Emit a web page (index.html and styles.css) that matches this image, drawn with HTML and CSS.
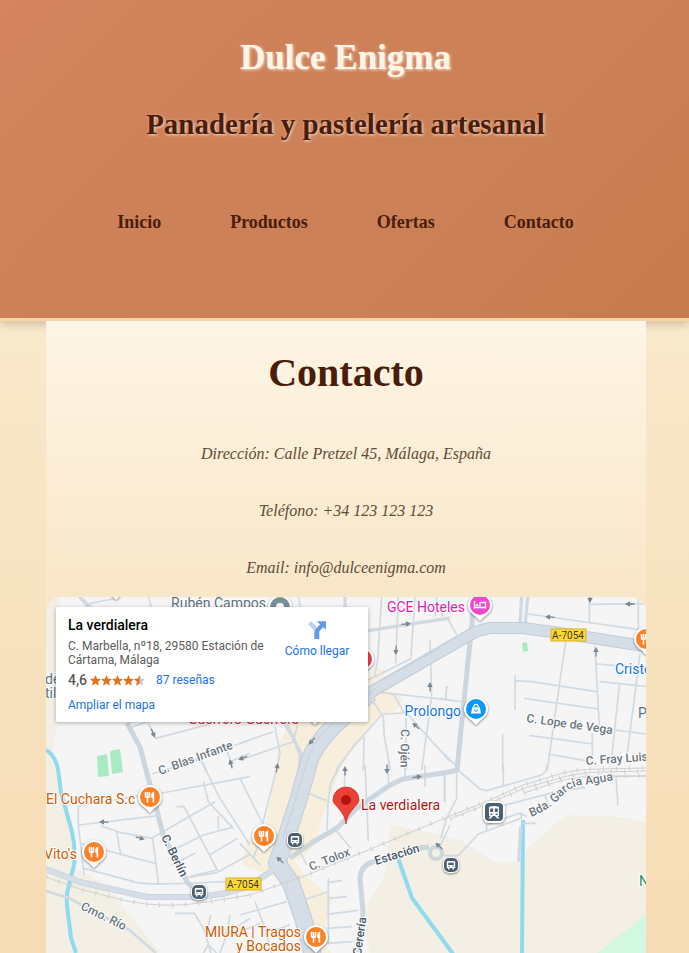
FILE: index.html
```html
<!DOCTYPE html>
<html lang="es">
<head>
<meta charset="utf-8">
<meta name="viewport" content="width=device-width, initial-scale=1">
<title>Dulce Enigma - Contacto</title>
<link rel="stylesheet" href="styles.css">
</head>
<body>
<header class="site-header">
  <h1 class="brand">Dulce Enigma</h1>
  <h2 class="tagline">Panadería y pastelería artesanal</h2>
  <nav class="menu">
    <a href="#inicio">Inicio</a>
    <a href="#productos">Productos</a>
    <a href="#ofertas">Ofertas</a>
    <a href="#contacto">Contacto</a>
  </nav>
</header>
<div class="page">
<main class="contact">
  <h2 class="title">Contacto</h2>
  <address class="details">
    <p>Dirección: Calle Pretzel 45, Málaga, España</p>
    <p>Teléfono: +34 123 123 123</p>
    <p>Email: info@dulceenigma.com</p>
  </address>
  <section class="map" aria-label="Mapa">
    <svg class="map-canvas" viewBox="0 0 600 356" preserveAspectRatio="xMidYMin slice">
      <defs>
        <g id="tail"><path d="M-12 0a12 12 0 1 1 24 0c0 6-3 8-7 11l-5 5-5-5c-4-3-7-5-7-11z" fill="#fff"/></g>
        <g id="food">
          <use href="#tail" class="pin-shadow"/><circle r="10" fill="#ff8126"/>
          <path d="M-4.500-5v4q0 1.500 2 1.500t2-1.500v-4M-2.500-5V5.500" fill="none" stroke="#fff" stroke-width="1.500"/>
          <path d="M4.200-5.200V5.500H2.600V1H1.200V-2Q1.300-5 4.200-5.200z" fill="#fff"/>
        </g>
        <g id="bus">
          <rect x="-8" y="-8" width="16" height="16" rx="6" fill="#fff" class="pin-shadow"/>
          <rect x="-7" y="-7" width="14" height="14" rx="5" fill="#4b6072"/>
          <path d="M-3.500-4h7l.7.800V3H3v1.500H1.500V3h-3v1.500H-3V3h-1.200v-6.200z" fill="#fff"/>
          <path d="M-2.800-2.300h5.600V0h-5.600z" fill="#4b6072"/><path d="M-2.700 1.300h1.200M1.500 1.300h1.200" stroke="#4b6072"/>
        </g>
        <g id="arrow"><path d="M-4.500 0H2" stroke="#7b858e" stroke-width="1.300"/><path d="M0-2.700L5 0 0 2.700z" fill="#7b858e"/></g>
      </defs>

      <rect width="600" height="356" fill="#f5f5f5"/>
      <!-- Land use -->
      <g class="land">
        <path d="M0 0h14l-3 126-4 30 8 38 13 45v33l16 6 20 15 50 63H0z"/>
        <path d="M345 227l49 11 20 5 35 22h25l5-11 40-36 55 2 26 5v183H313l6-20 7-24-5-20-4-22 6-17 15-25z"/>
      </g>
      <path class="shops" d="M322 85L327 70 337 73 341 83 344 93 357 101 351 113 336 118 307 153 294 171 291 181 274 228 269 248 249 265 261 281 287 301 281 318 279 348 285 356H261L257 325 244 301 231 281 196 268 201 245 219 230 229 180 232 150 244 124 262 120z"/>
      <path fill="#d3f8e2" d="M551 356l49-38v38z"/>
      <path fill="#a8ebc2" d="M51 159l10-2 2 22-11 1zM64 154l10-2 3 23-11 2zM476 46l5-1 1 9-5 1z"/>
      <!-- Rivers -->
      <g class="river">
        <path d="M0 153q9 5 12 19l3 23 11 40q4 18 2 33l-5 20q-3 9-2 20l4 33 5 15"/>
        <path d="M352 261l14 40 41 56"/>
        <path d="M477 223l-1 133"/>
      </g>
      <!-- Local streets, drawn per map tile -->
      <g class="streets">
        <g transform="translate(-6 -7) scale(.333333)">
          <path d="M120 20l35 30M150 40l70-13M325 20l15 50M275 412l50-18M325 400l22 45 160-42M630 450l-230 80M480 500l20 45M560 480l18 50M630 490l-60 25"/>
          <path class="mid" d="M118 20l36 40"/>
        </g>
        <g transform="translate(194 -7) scale(.333333)">
          <path d="M175 20l8 40M425 20l-12 190-10 50M475 20l-8 200M525 20l-12 180M590 20l-5 60M570 150l5 170-30 220M425 308l205 22M460 312l35 60M400 335l30 45 3 60 18 100M430 372l70-3 130 145M425 375l-85 95-52 70M372 440l-2 100M498 385v155M620 290l-3 40M0 460l100-35M105 410l15 80-10 50M0 510l160-55 15-60M140 400l45 90-8 50M155 440l-25-40M340 330l-80 70M385 270l130-65"/>
          <path class="mid" d="M385 122l245-38M315 20v40M140 400l40 90v50"/>
        </g>
        <g transform="translate(394 -7) scale(.333333)">
          <path d="M8 45l-2 35M22 85l28 48M265 72l353 50M448 20v80M450 43l168-2M595 20v100M378 150l-28 190-28 200M465 170l13 240M470 222l60 5M478 275l140 14M538 285l-22 210M600 190l-20 160-18 140M225 255v105M225 272l50 3 195 30M252 325l223 32M525 420l93 12M268 436l190 26M457 430v70M325 492l110 20M188 432v108M0 326l70 10M20 288l-3 40M0 480l50 48"/>
          <path class="mid" d="M245 20l-5 80M263 20l-7 80"/>
        </g>
        <g transform="translate(-6 168) scale(.333333)">
          <path d="M335 27l160-48M350 87l280-52M355 152L115 180v-55l15-5 185-30M115 180l17 150M180 182l60 20 95 18 190-110M230 200l12 70M120 235l225 60M338 220l18 140M132 310l150 40q40 15 350-5M410 125h22l100 190-80 18M480-20l60 120 90 140M490 50l15 60 75 80M410 250l80-40 85-22M535 152v42M395 300l72-36M508 270l85-50M440 338l90-15 100-55M630 355l-50 20M405 445h58l30 50 20 70M512 450l-12 60M570 450l-10 60-20 54M630 460l-80 50M490 564l15-25 25 25"/>
          <path class="mid-thin" d="M18 378l70 22 180 95 80 69"/>
        </g>
        <g transform="translate(194 168) scale(.333333)">
          <path d="M300 0l-28 55-8 60-3 80M315 10l-3 80M375 0l10 228M443 0l3 60M205 85l55 22M287 195l45 55M180 260l20 40M110 10l-48 190M0 40l70 140M0 235l60 65M40 280l25-70 55 0M555 0v65M613 30v80M495 0v40M630 180l-35 75M265 340v200M265 353l42-7M265 400l55-5M260 448l95-12M260 490l75-5M258 535l80-5M45 410l30 80 20 74M0 450l140-40M0 360l60-20M190 405l75-25M0 500l60-25M90 500l60-20"/>
        </g>
        <g transform="translate(394 168) scale(.333333)">
          <path d="M50 12l70 60 20 5 165-47 15-15V0M50 20v80l-30 60-18 60M190 0v60M15 30v80M0 272h55l60-65 130-48-5-15-100 35v20M190 122l150-40M315 90l10 30M345 80l90-12M500 35l118-2M528 40l6 82M243 145l17 10M245 175h42M420 60l15 12"/>
          <path class="mid" d="M242 185l-6 105"/>
        </g>
      </g>
      <!-- Collector roads -->
      <g class="collector">
        <path d="M81 126l13 24 6 23 9 32 8 33 24 47 8 8"/>
        <path d="M244 261l23-16 24-14 20-20 33-23 13-6 47-7 7-2 6-60 9-87 2-26"/>
        <path d="M383 250l-9 1-47 14q-12 3-13 16l3 34-5 42"/>
      </g>
      <circle class="roundabout" cx="390" cy="256" r="6"/>
      <!-- A-7054 -->
      <g class="highway-edge">
        <path class="w8" d="M0 272l34 13 67 15h53l27-4 23-7 27-19"/>
        <path class="w14" d="M610 51L521 37l-44-6h-33q-15 3-22 8l-95 55-15 12"/>
        <path class="w20" d="M324 96l-30 27q-25 23-31 42l-10 36-14 43-8 22 14 20 12 35 11 42"/>
      </g>
      <g class="highway">
        <path class="w8" d="M0 272l34 13 67 15h53l27-4 23-7 27-19"/>
        <path class="w14" d="M610 51L521 37l-44-6h-33q-15 3-22 8l-95 55-15 12"/>
        <path class="w20" d="M324 96l-30 27q-25 23-31 42l-10 36-14 43-8 22 14 20 12 35 11 42"/>
      </g>
      <path class="divider" d="M330 91l-36 29q-25 21-31 38l-13 43-13 40M394 51L324 89"/>
      <!-- Railway -->
      <g class="rail">
        <path d="M0 280l37 13 44 11q40 8 80 1l43-7 57-20 66-27 77-32 40-16 33-15 27-8q20-8 50-8l46-1"/>
        <path d="M404 222l40-16 35-15 28-8q20-7 47-8l46-1M478 196l32-11q20-6 44-6h46"/>
      </g>
      <g class="ties">
        <path d="M0 280l37 13 44 11q40 8 80 1l43-7 57-20 66-27 77-32 40-16 33-15 27-8q20-8 50-8l46-1"/>
        <path d="M404 222l40-16 35-15 28-8q20-7 47-8l46-1M478 196l32-11q20-6 44-6h46"/>
      </g>
      <!-- One-way arrows -->
      <g>
        <use href="#arrow" transform="translate(107 136) rotate(68)"/>
        <use href="#arrow" transform="translate(58 225) rotate(184)"/>
        <use href="#arrow" transform="translate(94 241) rotate(16)"/>
        <use href="#arrow" transform="translate(185 167) rotate(-105)"/>
        <use href="#arrow" transform="translate(197 161) rotate(160)"/>
        <use href="#arrow" transform="translate(231 171) rotate(-80)"/>
        <use href="#arrow" transform="translate(266 144) rotate(132)"/>
        <use href="#arrow" transform="translate(299 174) rotate(-90)"/>
        <use href="#arrow" transform="translate(371 180) rotate(-8)"/>
        <use href="#arrow" transform="translate(370 129) rotate(222)"/>
        <use href="#arrow" transform="translate(384 90) rotate(-90)"/>
        <use href="#arrow" transform="translate(350 53) rotate(95)"/>
        <use href="#arrow" transform="translate(360 27) rotate(-5)"/>
        <use href="#arrow" transform="translate(504 20) rotate(184)"/>
        <use href="#arrow" transform="translate(584 7) rotate(180)"/>
        <use href="#arrow" transform="translate(550 55) rotate(-90)"/>
        <use href="#arrow" transform="translate(544 1) rotate(90)"/>
        <use href="#arrow" transform="translate(341 172) rotate(90)"/>
        <use href="#arrow" transform="translate(234 263) rotate(222)"/>
        <use href="#arrow" transform="translate(393 249) rotate(222)"/>
      </g>
      <!-- Road shields -->
      <g class="shield">
        <rect x="505" y="32" width="35" height="12"/><text x="522" y="42">A-7054</text>
        <rect x="180" y="281" width="35" height="12"/><text x="197" y="291">A-7054</text>
      </g>
      <!-- Street names -->
      <g class="street-name">
        <text transform="translate(114 178) rotate(-20)">C. Blas Infante</text>
        <text class="dark" transform="translate(115 240) rotate(64)">C. Berlín</text>
        <text transform="translate(34 312) rotate(26)">Cmo. Río</text>
        <text transform="translate(265 274) rotate(-22)">C. Tolox</text>
        <text class="dark" transform="translate(330 268) rotate(-17)">Estación</text>
        <text transform="translate(355 132) rotate(91)">C. Ojén</text>
        <text transform="translate(480 125) rotate(8)">C. Lope de Vega</text>
        <text transform="translate(540 168) rotate(-4)">C. Fray Luis</text>
        <path id="garcia" d="M485 220Q503 213 515 200T539 188L575 182" fill="none"/>
        <text><textPath href="#garcia">Bda. García Agua</textPath></text>
        <text class="dark" transform="translate(315 359) rotate(-82)">Cerería</text>
      </g>
      <!-- Places -->
      <use href="#tail" class="pin-shadow" x="70" y="-13"/>
      <use href="#tail" class="pin-shadow" x="269" y="112"/>
      <g transform="translate(234 10)"><use href="#tail" class="pin-shadow"/><circle r="10" fill="#78909c"/><circle r="4" fill="#fff"/></g>
      <g transform="translate(316 62)"><use href="#tail" class="pin-shadow"/><circle r="10" fill="#ef3e4a"/></g>
      <g transform="translate(434 8)">
        <use href="#tail" class="pin-shadow"/><circle r="10" fill="#f548cc"/>
        <path d="M-5.500-4v8M-5.500 2.500h11M5.500 4V-2.500H0v5" fill="none" stroke="#fff" stroke-width="1.300"/><path d="M-4.500.200h3M-3-1.300v3" stroke="#fff"/>
      </g>
      <g transform="translate(430 112)">
        <use href="#tail" class="pin-shadow"/><circle r="10" fill="#0b96fc"/>
        <path d="M-3.800-1.800h7.600l1.200 6.300H-5z" fill="#fff"/><path d="M-2.200-2a2.200 2.600 0 0 1 4.400 0" fill="none" stroke="#fff" stroke-width="1.200"/><path d="M-1.700.500a1.700 1.700 0 0 0 3.400 0" fill="none" stroke="#0b96fc"/>
      </g>
      <use href="#food" x="104" y="200"/>
      <use href="#food" x="48" y="255"/>
      <use href="#food" x="218" y="239"/>
      <use href="#food" x="270" y="340"/>
      <use href="#food" x="600" y="42"/>
      <use href="#bus" x="249" y="243"/>
      <use href="#bus" x="153" y="295"/>
      <use href="#bus" x="405" y="268"/>
      <g transform="translate(448 215)">
        <rect x="-11" y="-11" width="22" height="22" rx="6" fill="#fff" class="pin-shadow"/><rect x="-9" y="-9" width="18" height="18" rx="4" fill="#4b6072"/>
        <path d="M-5-4.500Q-5-6 0-6t5 1.500V4H-5zM-3.500 4L-5.500 6.500h2L-1 4M3.500 4l2 2.500h-2L1 4" fill="#fff"/>
        <path d="M-3.800-3.500h3V0h-3zM.8-3.500h3V0h-3zM-3.500 1.500h1.800v1.500h-1.800zM1.700 1.500h1.800v1.500H1.700z" fill="#4b6072"/>
      </g>
      <g class="place">
        <text class="food" x="0" y="207">El Cuchara S.c</text>
        <text class="food" x="-2" y="262">Vito's</text>
        <text class="food end" x="255" y="340">MIURA | Tragos</text>
        <text class="food end" x="255" y="354">y Bocados</text>
        <text class="slate end" x="220" y="11">Rubén Campos</text>
        <text class="hotel end" x="419" y="15">GCE Hoteles</text>
        <text class="shop end" x="415" y="119">Prolongo</text>
        <text class="shop" x="569" y="77">Cristo</text>
        <text class="slate" x="592" y="121">Po</text>
        <text class="green" x="593" y="289">No</text>
        <text class="slate" x="-1" y="87">de</text>
        <text class="slate" x="-1" y="101">til</text>
        <text class="alert" x="142" y="127">Guerrero Guerrero</text>
        <text class="main-place" x="315" y="213">La verdialera</text>
      </g>
      <path d="M300 227c-1-7-3-10-7-15-3-4-6-6-6-9a13 13 0 1 1 26 0c0 3-3 5-6 9-4 5-6 8-7 15z" fill="#ea4335" stroke="#c5221f" stroke-width=".7"/>
      <circle cx="300" cy="203" r="5" fill="#b31412"/>
    </svg>

    <aside class="card">
      <div class="card-info">
        <h3 class="card-name">La verdialera</h3>
        <p class="card-address">C. Marbella, nº18, 29580 Estación de Cártama, Málaga</p>
        <div class="rating">
          <span class="score">4,6</span>
          <svg class="stars" viewBox="0 0 55 11" role="img" aria-label="4,6 de 5">
            <defs><path id="star" d="M5.500 0l1.600 3.700 3.900.4-3 2.600.9 4.100-3.400-2.200-3.400 2.200.9-4.100-3-2.600 3.900-.4z"/></defs>
            <g fill="#e7711b"><use href="#star"/><use href="#star" x="11"/><use href="#star" x="22"/><use href="#star" x="33"/></g>
            <use href="#star" x="44" fill="#c8c8c8"/>
            <path d="M49.500 0v8.600l-3.400 2.200.9-4.100-3-2.600 3.900-.4z" fill="#e7711b"/>
          </svg>
          <a href="#resenas">87 reseñas</a>
        </div>
        <a class="enlarge" href="#mapa">Ampliar el mapa</a>
      </div>
      <a class="directions" href="#ruta">
        <svg viewBox="0 0 18 18" aria-hidden="true"><path d="M0 3L3 0l6 6-2.500 4z" fill="#b9d3f6"/><path d="M6.300 18v-6.500q0-2.200 1.600-3.800L12 3.500 9 .3h9v8.500l-2.800-2.500-3.300 3.300q-.6.700-.6 1.700V18z" fill="#5e9ae8"/></svg>
        <span>Cómo llegar</span>
      </a>
    </aside>
  </section>
</main>
</div>
</body>
</html>
```
FILE: styles.css
```css
* { box-sizing: border-box; }

body {
  margin: 0;
  min-height: 100vh;
  display: flex;
  flex-direction: column;
  font-family: "Liberation Serif", serif;
  text-align: center;
  color: #4a1c0a;
  background: linear-gradient(#fdf2dc, #f8e7c6 45%, #f6dcb4);
}

h1, h2, h3, p { margin: 0; }
a { text-decoration: none; }

.site-header {
  padding: 37px 0 84px 2px;
  border-bottom: 3px solid #f5d2a8;
  background: linear-gradient(135deg, #d4845f, #cf8259 20%, #cc8056 65%, #c67c4e);
  background-clip: padding-box;
  box-shadow: 0 4px 8px rgba(74, 28, 10, .2);
}

.brand {
  font-size: 35px;
  line-height: 42px;
  color: #fff5e6;
  text-shadow: 1px 1px 3px rgba(255, 245, 230, .8);
}

.tagline {
  margin-top: 27px;
  font-size: 29px;
  line-height: 36px;
  text-shadow: 1px 1px 3px rgba(255, 245, 230, .8);
}

.menu {
  margin-top: 69px;
  display: flex;
  justify-content: center;
  gap: 69px;
}

.menu a {
  font-size: 18px;
  line-height: 23px;
  font-weight: bold;
  color: #4a1c0a;
}

.page {
  flex: 1;
  display: flex;
  justify-content: center;
  padding-left: 3px;
}

.contact {
  position: relative;
  width: 100%;
  max-width: 600px;
  display: flex;
  flex-direction: column;
  background: linear-gradient(#fff5e6, #f8e6c7 45%, #f5d9ae);
}

.title {
  margin-top: 29px;
  font-size: 40px;
  line-height: 46px;
}

.details {
  margin-top: 48px;
  display: grid;
  gap: 37px;
  font-size: 16px;
  line-height: 20px;
  color: #5d4b35;
}

.map {
  position: relative;
  flex: 1;
  min-height: 340px;
  margin-top: 19px;
  overflow: hidden;
  border-radius: 15px 15px 0 0;
  font-family: Roboto, sans-serif;
  text-align: left;
}

.map-canvas { display: block; width: 100%; height: 100%; }

.land { fill: #f4efe4; }
.shops { fill: #f7eedb; }
.river { fill: none; stroke: #90daee; stroke-width: 4; }
.streets { fill: none; stroke: #d0dae3; stroke-width: 5; stroke-linejoin: round; }
.streets .mid { stroke-width: 10; }
.streets .mid-thin { stroke-width: 8; }
.collector { fill: none; stroke: #cbd6df; stroke-width: 5; stroke-linejoin: round; }
.roundabout { fill: none; stroke: #cbd6df; stroke-width: 4; }
.highway, .highway-edge { fill: none; stroke-linejoin: round; }
.highway { stroke: #d5dee7; }
.highway-edge { stroke: #bfccd9; }
.highway .w8 { stroke-width: 5; }
.highway .w14 { stroke-width: 10; }
.highway .w20 { stroke-width: 16; }
.highway-edge .w8 { stroke-width: 6; }
.highway-edge .w14 { stroke-width: 12; }
.highway-edge .w20 { stroke-width: 18; }
.divider { fill: none; stroke: #c3d0dc; }
.rail { fill: none; stroke: #cfd0d2; }
.ties { fill: none; stroke: #cfd0d2; stroke-width: 5; stroke-dasharray: 1 12; }

.pin-shadow { filter: drop-shadow(0 1px 1px rgba(0, 0, 0, .45)); }

.shield rect { fill: #fdd835; stroke: #d9b424; }
.shield text { font-size: 10px; text-anchor: middle; fill: #3c3a2c; }

.street-name text, .place text {
  paint-order: stroke;
  stroke: #fff;
  stroke-width: 2px;
  stroke-linejoin: round;
}
.street-name text { font-size: 12px; font-weight: 500; fill: #6b7680; }
.street-name .dark { fill: #455566; }
.place text { font-size: 14px; }
.place .end { text-anchor: end; }
.place .food { fill: #d05a00; }
.place .slate { fill: #5a7380; }
.place .hotel { fill: #e021ae; }
.place .shop { fill: #1a73e8; }
.place .green { fill: #1e8e6a; }
.place .alert { fill: #d3303c; }
.place .main-place { fill: #b31412; }

.card {
  position: absolute;
  top: 10px;
  left: 10px;
  width: 312px;
  padding: 10px 12px;
  display: flex;
  justify-content: space-between;
  background: #fff;
  border-radius: 2px;
  box-shadow: 0 1px 4px rgba(0, 0, 0, .3);
  font-size: 12px;
  line-height: 14px;
  color: #5b5b5b;
}

.card a { color: #1a73e8; }
.card-info { width: 200px; }

.card-name {
  font-size: 14px;
  line-height: 16px;
  font-weight: 500;
  color: #000;
}

.card-address { margin-top: 6px; }

.rating {
  margin-top: 5px;
  display: flex;
  align-items: center;
}

.score { font-size: 14px; line-height: 16px; font-weight: 500; }
.stars { width: 55px; height: 11px; margin: 0 11px 0 3px; }
.enlarge { display: block; margin-top: 10px; }

.directions {
  width: 78px;
  text-align: center;
  white-space: nowrap;
}

.directions svg { display: block; width: 18px; height: 18px; margin: 4px auto 5px; }
```
